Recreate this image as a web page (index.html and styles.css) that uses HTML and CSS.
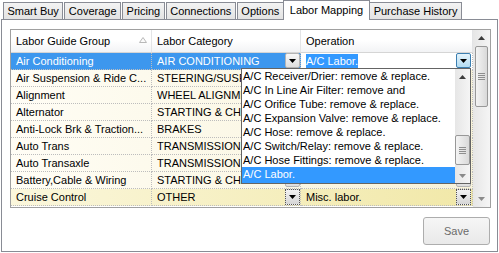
FILE: index.html
```html
<!doctype html>
<html>
  <head>
    <title>Labor Mapping</title>
    <link rel="stylesheet" href="styles.css">
  </head>
  <body>
    <div class="tabs">
      <div class="tab">Smart Buy</div>
      <div class="tab">Coverage</div>
      <div class="tab">Pricing</div>
      <div class="tab">Connections</div>
      <div class="tab">Options</div>
      <div class="tab active">Labor Mapping</div>
      <div class="tab">Purchase History</div>
    </div>

    <div class="page">
      <div class="grid">
        <div class="grid-body">
          <div class="row head">
            <div class="cell">Labor Guide Group
              <svg class="sort" width="8" height="6" viewBox="0 0 8 6"><polygon points="0.5,5.5 4,0.5 7.5,5.5" fill="#fbfbfb" stroke="#b8b8b8"/></svg>
            </div>
            <div class="cell">Labor Category</div>
            <div class="cell">Operation</div>
          </div>

          <div class="row">
            <div class="cell hl">Air Conditioning</div>
            <div class="cell combo hl"><span class="val">AIR CONDITIONING</span><span class="drop-btn"><svg width="7" height="4"><polygon points="0,0 7,0 3.5,4" fill="#000"/></svg></span></div>
            <div class="cell combo op editing"><span class="val"><span class="text-sel">A/C Labor.</span></span><span class="drop-btn hot"><svg width="7" height="4"><polygon points="0,0 7,0 3.5,4" fill="#000"/></svg></span></div>
          </div>
          <div class="row">
            <div class="cell">Air Suspension &amp; Ride C...</div>
            <div class="cell combo"><span class="val">STEERING/SUSPENSION</span></div>
            <div class="cell combo op"><span class="val"></span></div>
          </div>
          <div class="row">
            <div class="cell">Alignment</div>
            <div class="cell combo"><span class="val">WHEEL ALIGNMENT</span></div>
            <div class="cell combo op"><span class="val"></span></div>
          </div>
          <div class="row">
            <div class="cell">Alternator</div>
            <div class="cell combo"><span class="val">STARTING &amp; CHARGING</span></div>
            <div class="cell combo op"><span class="val"></span></div>
          </div>
          <div class="row">
            <div class="cell">Anti-Lock Brk &amp; Traction...</div>
            <div class="cell combo"><span class="val">BRAKES</span></div>
            <div class="cell combo op"><span class="val"></span></div>
          </div>
          <div class="row">
            <div class="cell">Auto Trans</div>
            <div class="cell combo"><span class="val">TRANSMISSION</span></div>
            <div class="cell combo op"><span class="val"></span></div>
          </div>
          <div class="row">
            <div class="cell">Auto Transaxle</div>
            <div class="cell combo"><span class="val">TRANSMISSION</span></div>
            <div class="cell combo op"><span class="val"></span></div>
          </div>
          <div class="row">
            <div class="cell">Battery,Cable &amp; Wiring</div>
            <div class="cell combo"><span class="val">STARTING &amp; CHARGING</span><span class="drop-btn"><svg width="7" height="4"><polygon points="0,0 7,0 3.5,4" fill="#000"/></svg></span></div>
            <div class="cell combo op"><span class="val"></span><span class="drop-btn"><svg width="7" height="4"><polygon points="0,0 7,0 3.5,4" fill="#000"/></svg></span></div>
          </div>
          <div class="row current">
            <div class="cell">Cruise Control</div>
            <div class="cell combo"><span class="val">OTHER</span><span class="drop-btn focus"><svg width="7" height="4"><polygon points="0,0 7,0 3.5,4" fill="#000"/></svg></span></div>
            <div class="cell combo op"><span class="val">Misc. labor.</span><span class="drop-btn focus"><svg width="7" height="4"><polygon points="0,0 7,0 3.5,4" fill="#000"/></svg></span></div>
          </div>
        </div>

        <div class="vscroll">
          <div class="sb-btn"><svg width="7" height="4"><polygon points="0,4 7,4 3.5,0" fill="#3c3c3c"/></svg></div>
          <div class="sb-track">
            <div class="sb-thumb tall">
              <svg width="7" height="7"><path d="M0 0.5h7M0 2.5h7M0 4.5h7M0 6.5h7" stroke="#8e8e8e"/></svg>
            </div>
          </div>
          <div class="sb-btn"><svg width="7" height="4"><polygon points="0,0 7,0 3.5,4" fill="#8a8a8a"/></svg></div>
        </div>

        <div class="dropdown">
          <ul class="options">
            <li>A/C Receiver/Drier: remove &amp; replace.</li>
            <li>A/C In Line Air Filter: remove and</li>
            <li>A/C Orifice Tube: remove &amp; replace.</li>
            <li>A/C Expansion Valve: remove &amp; replace.</li>
            <li>A/C Hose: remove &amp; replace.</li>
            <li>A/C Switch/Relay: remove &amp; replace.</li>
            <li>A/C Hose Fittings: remove &amp; replace.</li>
            <li class="picked">A/C Labor.</li>
          </ul>
          <div class="vscroll mini">
            <div class="sb-btn"><svg width="7" height="4"><polygon points="0,4 7,4 3.5,0" fill="#3c3c3c"/></svg></div>
            <div class="sb-track">
              <div class="sb-thumb low">
                <svg width="7" height="7"><path d="M0 0.5h7M0 2.5h7M0 4.5h7M0 6.5h7" stroke="#8e8e8e"/></svg>
              </div>
            </div>
            <div class="sb-btn"><svg width="7" height="4"><polygon points="0,0 7,0 3.5,4" fill="#8a8a8a"/></svg></div>
          </div>
        </div>
      </div>

      <div class="actions">
        <button class="save">Save</button>
      </div>
    </div>
  </body>
</html>
```

FILE: styles.css
```css
* {
  box-sizing: border-box;
}
body {
  margin: 0;
  background: #fff;
  font-family: "Liberation Sans", Arial, sans-serif;
  font-size: 11px;
  color: #000;
}

/* tab strip */
.tabs {
  display: flex;
  align-items: flex-end;
  height: 19px;
  padding-left: 3px;
}
.tab {
  height: 17px;
  line-height: 16px;
  padding: 0 3.5px;
  margin-right: 1px;
  border: 1px solid #898c95;
  border-bottom: none;
  background: linear-gradient(#f3f3f3, #e3e3e3);
  white-space: nowrap;
}
.tab.active {
  position: relative;
  z-index: 1;
  height: 20px;
  line-height: 18px;
  padding: 0 6px;
  margin: 0 -1px -1px -2px;
  background: #fff;
}

/* tab page */
.page {
  margin: 0 1px;
  height: 233px;
  border: 1px solid #898c95;
  padding: 9px 6px 0 8px;
}

/* data grid */
.grid {
  position: relative;
  display: flex;
  height: 179px;
  border: 1px solid #a0a0a0;
}
.grid-body {
  width: 462px;
}
.row {
  display: grid;
  grid-template-columns: 141px 149px 172px;
  height: 17px;
  background: linear-gradient(to right, #fffdf5, #f8f3d9);
}
.row.current {
  background: linear-gradient(to right, #fbf7dc, #f1e8a8);
}
.cell {
  display: flex;
  align-items: flex-start;
  padding-left: 5px;
  line-height: 16px;
  white-space: nowrap;
  overflow: hidden;
  border-right: 1px dotted #bdbdbd;
  border-bottom: 1px dotted #bdbdbd;
}
.row.head {
  height: 23px;
  background: linear-gradient(#fff 0%, #fff 45%, #f1f2f4 100%);
}
.head .cell {
  line-height: 22px;
  border-right: 1px solid #e3e4e6;
  border-bottom: 1px solid #d5d5d5;
}
.sort {
  margin: 7px 4px 0 auto;
}
.cell.hl {
  background: #3d97ee;
  color: #fff;
}
.cell.editing {
  background: #fff;
}
.combo .val {
  flex: 1;
  overflow: hidden;
}
.op .drop-btn {
  margin-right: 1px;
}
.text-sel {
  display: inline-block;
  background: #3399ff;
  color: #fff;
  line-height: 14px;
  margin-top: 1px;
}
.drop-btn {
  flex: none;
  display: flex;
  align-items: center;
  justify-content: center;
  width: 15px;
  height: 15px;
  border: 1px solid #b4b4b4;
  border-radius: 2px;
  background: linear-gradient(#f8f8f8, #dedede);
}
.drop-btn.hot {
  border-color: #3c7fb1;
  background: linear-gradient(#e5f4fc, #b3dcf2);
}
.drop-btn.focus {
  height: 16px;
  border: 1px dotted #555;
  border-radius: 0;
  background: linear-gradient(#f2f2f2, #d6d6d6);
}

/* scrollbars */
.vscroll {
  display: flex;
  flex-direction: column;
  width: 17px;
  background: linear-gradient(to right, #e6e6e6, #f5f5f5);
}
.sb-btn {
  flex: none;
  display: flex;
  align-items: center;
  justify-content: center;
  height: 16px;
}
.sb-track {
  flex: 1;
}
.sb-thumb {
  display: flex;
  align-items: center;
  justify-content: center;
  margin: 0 2px;
  border: 1px solid #989898;
  border-radius: 2px;
  background: linear-gradient(to right, #f4f4f4, #d9d9d9);
}
.sb-thumb.tall {
  height: 61px;
}
.vscroll.mini {
  width: 15px;
}
.vscroll.mini .sb-btn {
  height: 15px;
}
.sb-thumb.low {
  height: 30px;
  margin: 51px 0 0;
}

/* open combo list */
.dropdown {
  position: absolute;
  z-index: 2;
  left: 230px;
  top: 38px;
  width: 230px;
  height: 116px;
  display: flex;
  border: 1px solid #646464;
  background: #fff;
}
.options {
  flex: 1;
  list-style: none;
  margin: 0;
  padding: 0;
}
.options li {
  height: 14px;
  line-height: 14px;
  padding-left: 1px;
  white-space: nowrap;
  overflow: hidden;
}
.options li.picked {
  height: 16px;
  background: #3399ff;
  color: #fff;
}

.actions {
  display: flex;
  justify-content: flex-end;
  padding: 9px 1px 0 0;
}
.save {
  width: 67px;
  height: 28px;
  border: 1px solid #adadad;
  border-radius: 3px;
  background: linear-gradient(#f6f6f6, #e9e9e9);
  font: inherit;
  color: #6b6b6b;
}
```
